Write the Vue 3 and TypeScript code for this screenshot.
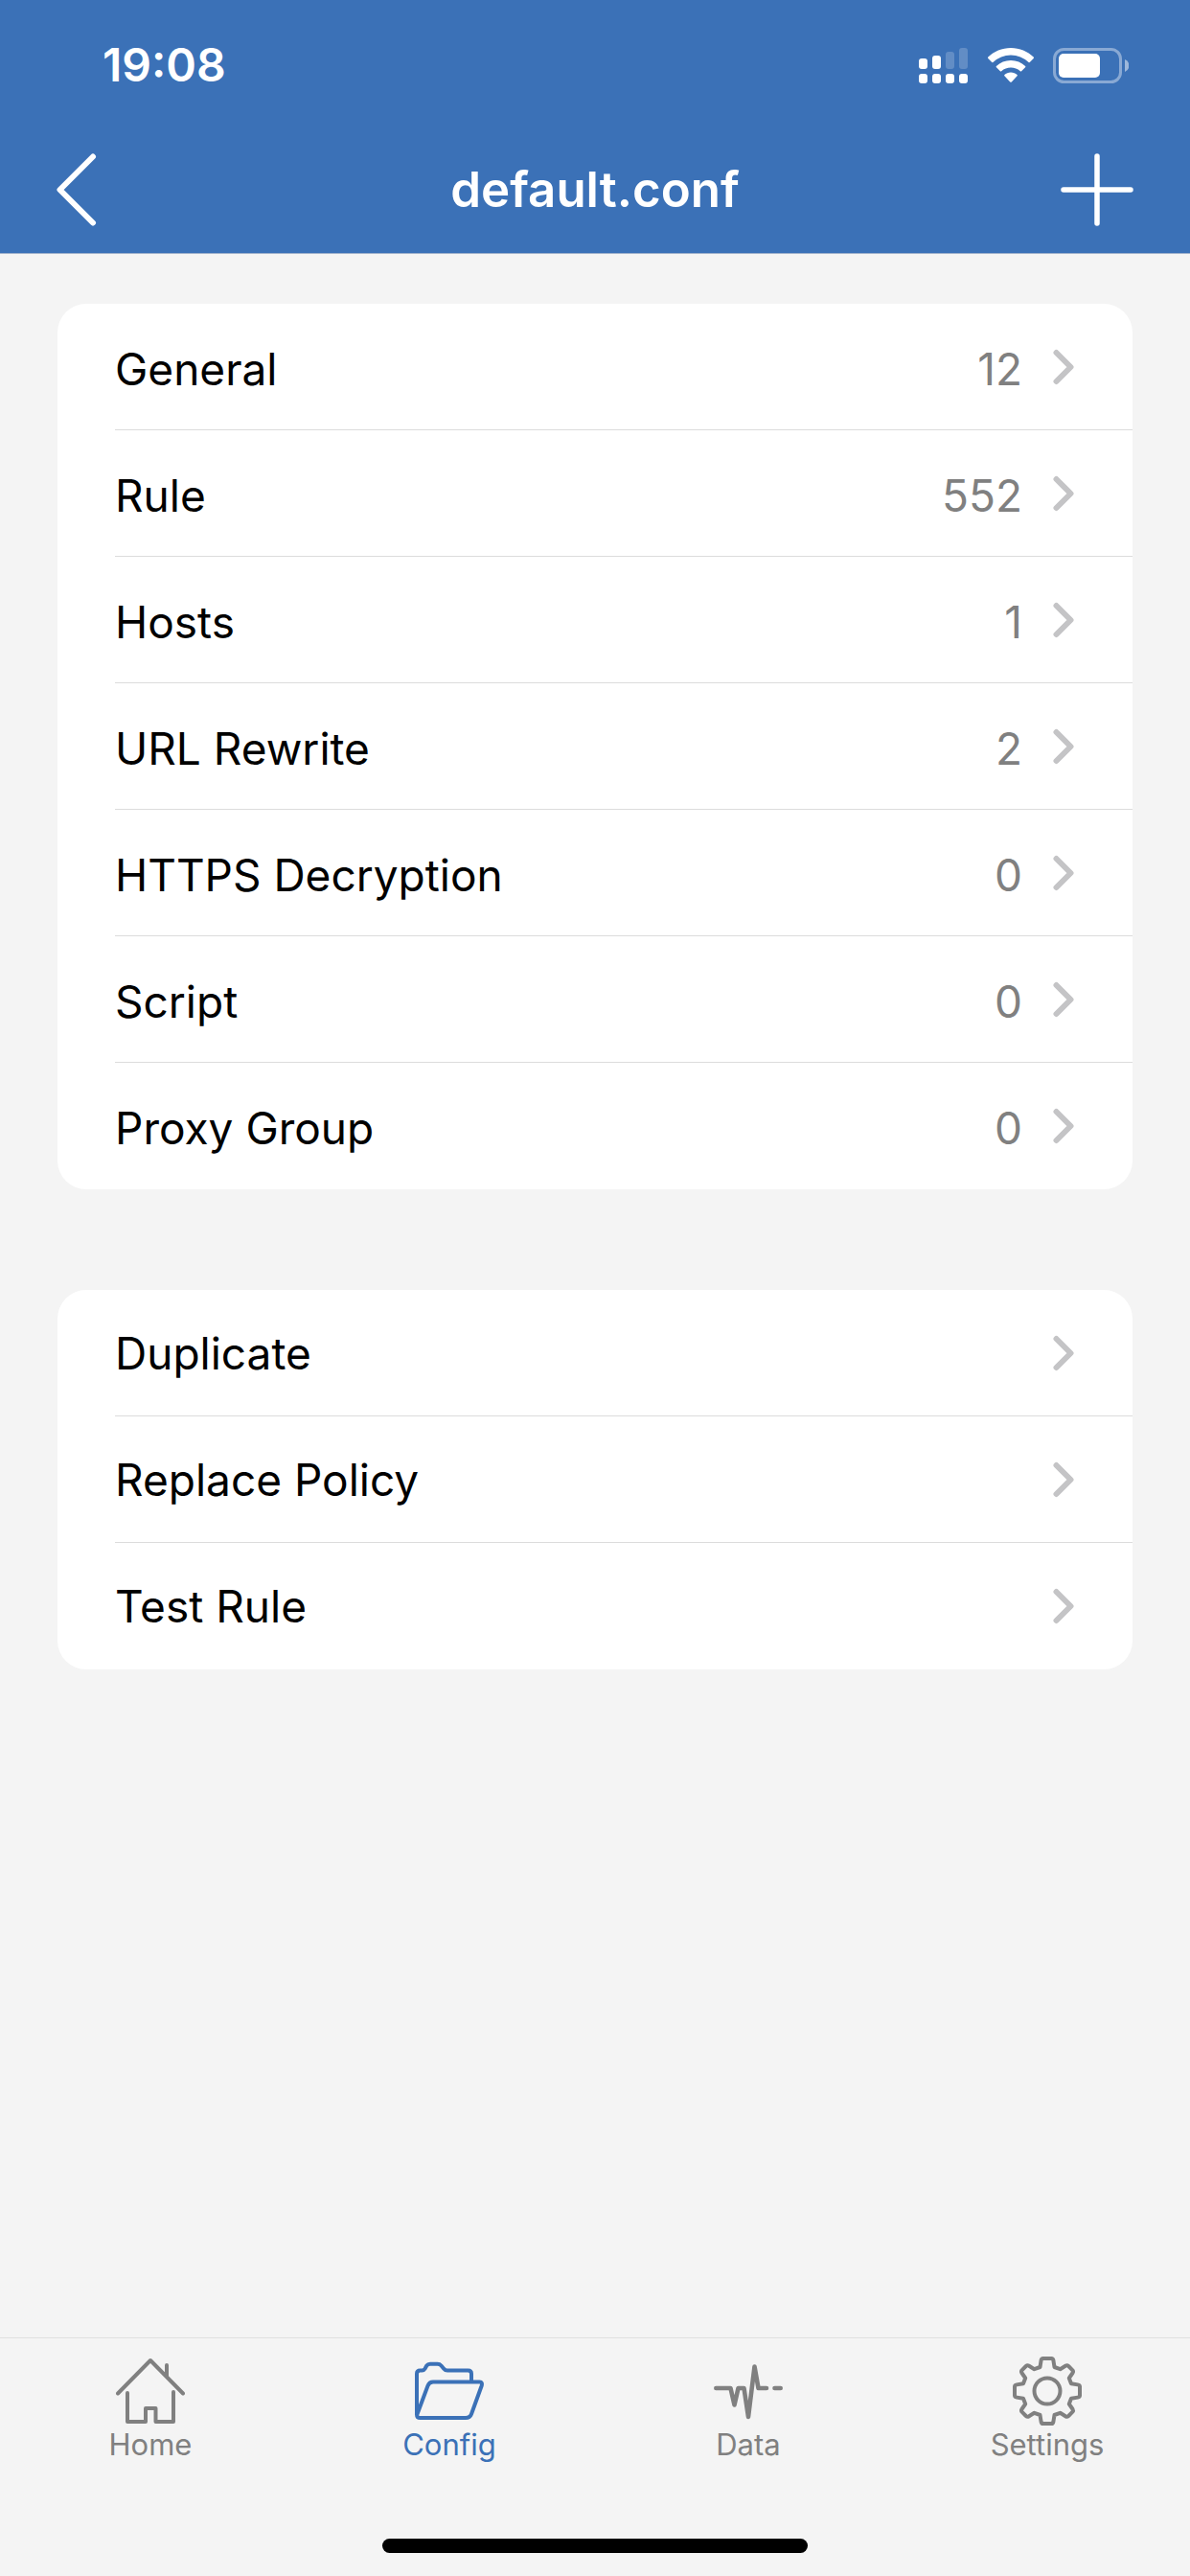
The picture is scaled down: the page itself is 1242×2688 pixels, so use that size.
<script setup lang="ts">
import { ref } from 'vue'

interface Row {
  label: string
  count?: number
}

interface Tab {
  id: string
  label: string
}

const sections: Row[] = [
  { label: 'General', count: 12 },
  { label: 'Rule', count: 552 },
  { label: 'Hosts', count: 1 },
  { label: 'URL Rewrite', count: 2 },
  { label: 'HTTPS Decryption', count: 0 },
  { label: 'Script', count: 0 },
  { label: 'Proxy Group', count: 0 },
]

const actions: Row[] = [
  { label: 'Duplicate' },
  { label: 'Replace Policy' },
  { label: 'Test Rule' },
]

const tabs: Tab[] = [
  { id: 'home', label: 'Home' },
  { id: 'config', label: 'Config' },
  { id: 'data', label: 'Data' },
  { id: 'settings', label: 'Settings' },
]

const activeTab = ref('config')
</script>

<template>
  <div class="screen">
    <header class="header">
      <div class="status">
        <time class="clock">19:08</time>
        <div class="indicators">
          <svg class="signal" viewBox="0 0 51 37" aria-hidden="true">
            <g fill="#fff">
              <rect x="0" y="11" width="9" height="11" rx="3" />
              <rect x="14" y="8" width="9" height="14" rx="3" />
              <rect x="0" y="27" width="9" height="10" rx="3" />
              <rect x="14" y="27" width="9" height="10" rx="3" />
              <rect x="28" y="27" width="9" height="10" rx="3" />
              <rect x="42" y="27" width="9" height="10" rx="3" />
            </g>
            <g fill="#fff" fill-opacity="0.2">
              <rect x="28" y="4" width="9" height="18" rx="3" />
              <rect x="42" y="0" width="9" height="22" rx="3" />
            </g>
          </svg>
          <svg class="wifi" viewBox="0 0 48 37" aria-hidden="true">
            <g fill="#fff">
              <path d="M24 0C14.800 0 6.400 3.600 .3 9.600Q-.3 10.200 .3 10.900L4 14.800Q4.700 15.500 5.400 14.900A27 27 0 0 1 42.600 14.900Q43.300 15.500 44 14.800L47.700 10.900Q48.300 10.200 47.700 9.600C41.600 3.600 33.200 0 24 0Z" />
              <path d="M24 13C18.200 13 12.900 15.200 8.900 18.900Q8.200 19.500 8.900 20.200L12.900 24.200Q13.500 24.800 14.200 24.200A14.800 14.800 0 0 1 33.800 24.200Q34.500 24.800 35.100 24.200L39.100 20.200Q39.800 19.500 39.100 18.900C35.100 15.200 29.800 13 24 13Z" />
              <path d="M24 25.600C21.400 25.600 19.200 26.500 17.400 28Q16.800 28.600 17.400 29.200L23.200 35.400Q24 36.200 24.800 35.400L30.600 29.200Q31.200 28.600 30.600 28C28.800 26.500 26.600 25.600 24 25.600Z" />
            </g>
          </svg>
          <svg class="battery" viewBox="0 0 79 37" aria-hidden="true">
            <rect x="1.500" y="1.500" width="69" height="34" rx="10" fill="none" stroke="#fff" stroke-opacity="0.4" stroke-width="3" />
            <rect x="6" y="6" width="43" height="25" rx="5" fill="#fff" />
            <path d="M75 12a7 7 0 0 1 0 13z" fill="#fff" fill-opacity="0.5" />
          </svg>
        </div>
      </div>
      <nav class="navbar">
        <button class="nav-button" type="button" aria-label="Back">
          <svg class="back-icon" viewBox="0 0 42 76" aria-hidden="true">
            <path d="M38 3.500L3.500 38L38 72.500" fill="none" stroke="#fff" stroke-width="6" stroke-linecap="round" stroke-linejoin="round" />
          </svg>
        </button>
        <h1 class="title">default.conf</h1>
        <button class="nav-button nav-button--end" type="button" aria-label="Add">
          <svg class="add-icon" viewBox="0 0 76 76" aria-hidden="true">
            <path d="M38 3V73M3 38H73" fill="none" stroke="#fff" stroke-width="5.500" stroke-linecap="round" />
          </svg>
        </button>
      </nav>
    </header>

    <main class="content">
      <ul class="card card--counts">
        <li v-for="row in sections" :key="row.label">
          <button class="row" type="button">
            <span class="label">{{ row.label }}</span>
            <span class="count">{{ row.count }}</span>
            <svg class="chevron" viewBox="0 0 22 38" aria-hidden="true">
              <path d="M3.500 4L18.500 19L3.500 34" />
            </svg>
          </button>
        </li>
      </ul>
      <ul class="card">
        <li v-for="row in actions" :key="row.label">
          <button class="row" type="button">
            <span class="label">{{ row.label }}</span>
            <svg class="chevron" viewBox="0 0 22 38" aria-hidden="true">
              <path d="M3.500 4L18.500 19L3.500 34" />
            </svg>
          </button>
        </li>
      </ul>
    </main>

    <footer class="footer">
      <nav class="tabs">
        <button
          v-for="tab in tabs"
          :key="tab.id"
          class="tab"
          :class="{ 'tab--active': tab.id === activeTab }"
          type="button"
          @click="activeTab = tab.id"
        >
          <svg class="tab-icon" viewBox="0 0 72 72" aria-hidden="true">
            <g v-if="tab.id === 'home'">
              <path d="M2 38.500L36 4L70 38.500M53 9V21M12 38V68H31V54H41.500V68H60V37" />
            </g>
            <g v-else-if="tab.id === 'config'">
              <path d="M59 26V18Q59 14.500 55.500 14.500H34Q31.500 14.500 30 12.500L27.500 9.500Q26 7.800 23.500 7.800H16Q13.500 7.800 12.300 9.500L10.500 12.800Q9.500 14.500 7.500 14.500H5.500Q2 14.500 2 18V60.500Q2 64 5.500 64H53Q57.500 64 59 60L69.500 31Q71 26.500 67.500 26.500H19Q15 26.500 13.500 30.500L2.500 60" />
            </g>
            <g v-else-if="tab.id === 'data'" stroke-width="4.600">
              <path d="M2.300 33H17.500L21.500 50.500L25.500 33H31.500L36 63L42.500 10.500L46.500 33H55M63.500 33H69.700" />
            </g>
            <g v-else>
              <circle cx="36" cy="36" r="13.500" />
              <path d="M31.500 2H40.500Q42 2 42.400 4L43.500 11L49.500 13.200L55 9.800Q56.700 8.700 58.200 10L62.500 14.300Q63.500 15.500 62.600 17L58.800 22.500L61 28.300L67.800 29.400Q70 29.800 70 31.500V40.500Q70 42.200 67.800 42.600L61 43.700L58.800 49.500L62.600 55Q63.500 56.500 62.500 57.700L58.200 62Q56.700 63.300 55 62.200L49.500 58.800L43.500 61L42.400 68Q42 70 40.500 70H31.500Q30 70 29.600 68L28.500 61L22.500 58.800L17 62.200Q15.300 63.300 13.800 62L9.500 57.700Q8.500 56.500 9.400 55L13.200 49.500L11 43.700L4.200 42.600Q2 42.200 2 40.500V31.500Q2 29.800 4.200 29.400L11 28.300L13.200 22.500L9.400 17Q8.500 15.500 9.500 14.300L13.800 10Q15.300 8.700 17 9.800L22.500 13.200L28.500 11L29.600 4Q30 2 31.500 2Z" />
            </g>
          </svg>
          <span>{{ tab.label }}</span>
        </button>
      </nav>
      <div class="home-indicator"></div>
    </footer>
  </div>
</template>

<style>
body {
  margin: 0;
  background: #f4f4f4;
}
</style>

<style scoped>
.screen {
  display: flex;
  flex-direction: column;
  min-height: 100vh;
  background: #f4f4f4;
  color: #000;
  font-family: Inter, "Liberation Sans", sans-serif;
  font-size: 46px;
}

button {
  margin: 0;
  padding: 0;
  border: 0;
  background: none;
  color: inherit;
  font: inherit;
  cursor: pointer;
}

svg {
  display: block;
}

.header {
  border-bottom: 1px solid #a3b4cc;
  background: #3b71b7;
  color: #fff;
}

.status {
  display: flex;
  align-items: center;
  justify-content: space-between;
  height: 132px;
  padding: 4px 64px 0 107px;
  box-sizing: border-box;
}

.clock {
  font-size: 48px;
  font-weight: 600;
  line-height: 56px;
}

.indicators {
  display: flex;
  align-items: center;
}

.signal {
  width: 51px;
  height: 37px;
}

.wifi {
  width: 48px;
  height: 37px;
  margin-left: 21px;
}

.battery {
  width: 79px;
  height: 37px;
  margin-left: 20px;
}

.navbar {
  display: grid;
  grid-template-columns: 1fr auto 1fr;
  align-items: center;
  height: 132px;
  padding: 0 59px;
}

.nav-button {
  justify-self: start;
}

.nav-button--end {
  justify-self: end;
}

.back-icon {
  width: 42px;
  height: 76px;
}

.add-icon {
  width: 76px;
  height: 76px;
}

.title {
  margin: 0;
  font-size: 51px;
  font-weight: 600;
  line-height: 60px;
}

.content {
  display: flex;
  flex: 1;
  flex-direction: column;
  gap: 105px;
  padding: 52px 60px;
}

.card {
  margin: 0;
  padding: 0 0 0 60px;
  border-radius: 30px;
  background: #fff;
  list-style: none;
}

.card li + li {
  box-shadow: 0 -1px #dcdcdc;
}

.row {
  display: flex;
  align-items: center;
  width: 100%;
  height: 132px;
  padding-right: 61px;
  line-height: 56px;
  text-align: left;
}

.label {
  flex: 1;
}

.count {
  margin-right: 32px;
  color: #808080;
}

.card--counts .label,
.card--counts .count {
  padding-top: 4px;
}

.chevron {
  width: 22px;
  height: 38px;
  fill: none;
  stroke: #c4c4c6;
  stroke-width: 6;
  stroke-linecap: round;
  stroke-linejoin: round;
}

.footer {
  border-top: 1px solid #e0e0e0;
}

.tabs {
  display: flex;
  justify-content: space-between;
  padding: 19px 49px 0 57px;
}

.tab {
  display: flex;
  flex-direction: column;
  align-items: center;
  gap: 1px;
  width: 200px;
  color: #808080;
  font-size: 31px;
  line-height: 38px;
}

.tab--active {
  color: #3b71b7;
}

.tab-icon {
  width: 72px;
  height: 72px;
  fill: none;
  stroke: currentColor;
  stroke-width: 4;
  stroke-linecap: round;
  stroke-linejoin: round;
}

.home-indicator {
  width: 444px;
  height: 15px;
  margin: 79px auto 24px;
  border-radius: 8px;
  background: #000;
}
</style>
